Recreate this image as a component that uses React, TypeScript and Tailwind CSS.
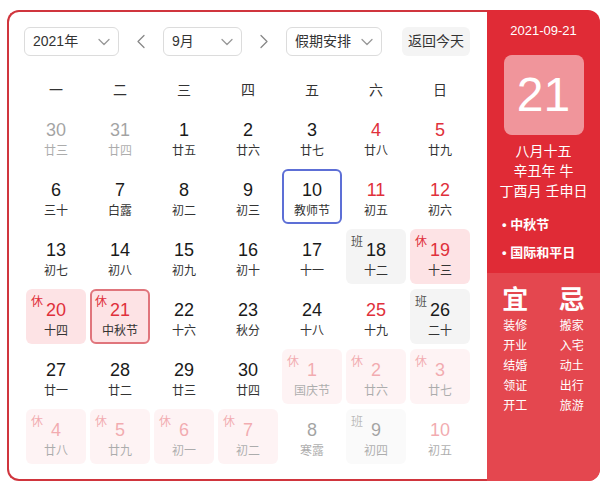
import React from 'react';

type Cell = {
	d: number;
	l: string;
	badge?: '休' | '班';
	red?: boolean;
	other?: boolean;
	selected?: boolean;
	hover?: boolean;
};

const WEEKDAYS = ['一', '二', '三', '四', '五', '六', '日'];

const CELLS: Cell[] = [
	{ d: 30, l: '廿三', other: true },
	{ d: 31, l: '廿四', other: true },
	{ d: 1, l: '廿五' },
	{ d: 2, l: '廿六' },
	{ d: 3, l: '廿七' },
	{ d: 4, l: '廿八', red: true },
	{ d: 5, l: '廿九', red: true },

	{ d: 6, l: '三十' },
	{ d: 7, l: '白露' },
	{ d: 8, l: '初二' },
	{ d: 9, l: '初三' },
	{ d: 10, l: '教师节', hover: true },
	{ d: 11, l: '初五', red: true },
	{ d: 12, l: '初六', red: true },

	{ d: 13, l: '初七' },
	{ d: 14, l: '初八' },
	{ d: 15, l: '初九' },
	{ d: 16, l: '初十' },
	{ d: 17, l: '十一' },
	{ d: 18, l: '十二', badge: '班' },
	{ d: 19, l: '十三', badge: '休', red: true },

	{ d: 20, l: '十四', badge: '休', red: true },
	{ d: 21, l: '中秋节', badge: '休', red: true, selected: true },
	{ d: 22, l: '十六' },
	{ d: 23, l: '秋分' },
	{ d: 24, l: '十八' },
	{ d: 25, l: '十九', red: true },
	{ d: 26, l: '二十', badge: '班' },

	{ d: 27, l: '廿一' },
	{ d: 28, l: '廿二' },
	{ d: 29, l: '廿三' },
	{ d: 30, l: '廿四' },
	{ d: 1, l: '国庆节', badge: '休', red: true, other: true },
	{ d: 2, l: '廿六', badge: '休', red: true, other: true },
	{ d: 3, l: '廿七', badge: '休', red: true, other: true },

	{ d: 4, l: '廿八', badge: '休', red: true, other: true },
	{ d: 5, l: '廿九', badge: '休', red: true, other: true },
	{ d: 6, l: '初一', badge: '休', red: true, other: true },
	{ d: 7, l: '初二', badge: '休', red: true, other: true },
	{ d: 8, l: '寒露', other: true },
	{ d: 9, l: '初四', badge: '班', other: true },
	{ d: 10, l: '初五', red: true, other: true },
];

const YI = ['装修', '开业', '结婚', '领证', '开工'];
const JI = ['搬家', '入宅', '动土', '出行', '旅游'];

function Chevron({ dir = 'down', className = '' }: { dir?: 'down' | 'left' | 'right'; className?: string }) {
	const d =
		dir === 'down' ? 'M2 4.5 L7 9.5 L12 4.5' : dir === 'left' ? 'M9 1.5 L3 7.5 L9 13.5' : 'M3 1.5 L9 7.5 L3 13.5';
	const size = dir === 'down' ? { w: 14, h: 14, vb: '0 0 14 14' } : { w: 12, h: 15, vb: '0 0 12 15' };
	return (
		<svg width={size.w} height={size.h} viewBox={size.vb} className={className} fill="none">
			<path d={d} stroke="currentColor" strokeWidth="1.3" strokeLinecap="round" strokeLinejoin="round" />
		</svg>
	);
}

function Select({ label, width }: { label: string; width: string }) {
	return (
		<div
			className={`${width} h-[29px] border border-[#dcdcdc] rounded-[6px] flex items-center justify-between pl-[8px] pr-[7px] text-[14px] text-[#333]`}
		>
			<span>{label}</span>
			<Chevron className="text-[#999]" />
		</div>
	);
}

function DayCell({ c }: { c: Cell }) {
	let bg = '';
	if (c.badge === '休') bg = 'bg-[#fde3e5]';
	if (c.badge === '班') bg = 'bg-[#f4f4f4]';
	let outline = '';
	if (c.selected) outline = 'outline-2 outline-offset-[-2px] outline-[#e0757c]';
	if (c.hover) outline = 'outline-2 outline-offset-[-2px] outline-[#5d6fd6]';
	const numColor = c.red ? 'text-[#e0303b]' : 'text-[#1a1a1a]';
	return (
		<div
			className={`relative h-[55px] rounded-[6px] flex flex-col items-center pt-[10px] ${bg} ${outline} ${
				c.other ? 'opacity-40' : ''
			}`}
		>
			{c.badge && (
				<span
					className={`absolute left-[5px] top-[5px] text-[12px] leading-[16px] ${
						c.badge === '休' ? 'text-[#e0303b]' : 'text-[#555]'
					}`}
				>
					{c.badge}
				</span>
			)}
			<span className={`text-[18px] leading-[22px] ${numColor}`}>{c.d}</span>
			<span className="text-[12px] leading-[16px] mt-[2px] text-[#333]">{c.l}</span>
		</div>
	);
}

export default function App() {
	return (
		<div
			className="w-[606px] h-[487px] bg-white pl-[7px] pt-[10px]"
			style={{ fontFamily: '"Liberation Sans", Arial, "Noto Sans CJK SC", sans-serif' }}
		>
			<div className="flex w-[593px] h-[471px]">
				{/* Calendar */}
				<div className="w-[480px] h-full border-2 border-r-0 border-[#d0353d] rounded-l-[12px] pl-[15px] pt-[15px]">
					<div className="flex items-center">
						<Select label="2021年" width="w-[95px]" />
						<div className="w-[44px] flex justify-center text-[#888]">
							<Chevron dir="left" />
						</div>
						<Select label="9月" width="w-[79px]" />
						<div className="w-[44px] flex justify-center text-[#888]">
							<Chevron dir="right" />
						</div>
						<Select label="假期安排" width="w-[96px]" />
						<div className="ml-[20px] w-[68px] h-[29px] rounded-[6px] bg-[#f4f4f4] flex items-center justify-center text-[14px] text-[#333]">
							返回今天
						</div>
					</div>

					<div className="grid grid-cols-7 gap-x-[4px] pl-[2px] w-[446px] mt-[24px] h-[20px] text-[14px] leading-[20px] text-[#333]">
						{WEEKDAYS.map((w) => (
							<div key={w} className="text-center">
								{w}
							</div>
						))}
					</div>

					<div className="grid grid-cols-7 gap-x-[4px] gap-y-[5px] pl-[2px] w-[446px] mt-[9px]">
						{CELLS.map((c, i) => (
							<DayCell key={i} c={c} />
						))}
					</div>
				</div>

				{/* Side panel */}
				<div className="w-[113px] h-full rounded-r-[12px] overflow-hidden bg-[#e02b36] flex flex-col text-white">
					<div className="flex flex-col items-center pt-[12px]">
						<div className="text-[13px] leading-[18px]">2021-09-21</div>
						<div className="mt-[15px] w-[80px] h-[80px] rounded-[8px] bg-white/50 flex items-center justify-center text-[48px] leading-none">
							21
						</div>
						<div className="mt-[6px] text-[14px] leading-[20px] text-center">
							<div>八月十五</div>
							<div>辛丑年 牛</div>
							<div>丁酉月 壬申日</div>
						</div>
					</div>
					<div className="mt-[10px] pl-[15px] text-[13px] leading-[28px] font-semibold">
						<div>• 中秋节</div>
						<div>• 国际和平日</div>
					</div>
					<div className="mt-[6px] flex-1 bg-[#e4474f] grid grid-cols-2 content-start pt-[12px]">
						<div className="flex flex-col items-center">
							<div className="text-[26px] leading-[30px] font-bold">宜</div>
							<div className="mt-[1px] text-[12px] leading-[20px] text-center">
								{YI.map((y) => (
									<div key={y}>{y}</div>
								))}
							</div>
						</div>
						<div className="flex flex-col items-center">
							<div className="text-[26px] leading-[30px] font-bold">忌</div>
							<div className="mt-[1px] text-[12px] leading-[20px] text-center">
								{JI.map((y) => (
									<div key={y}>{y}</div>
								))}
							</div>
						</div>
					</div>
				</div>
			</div>
		</div>
	);
}
